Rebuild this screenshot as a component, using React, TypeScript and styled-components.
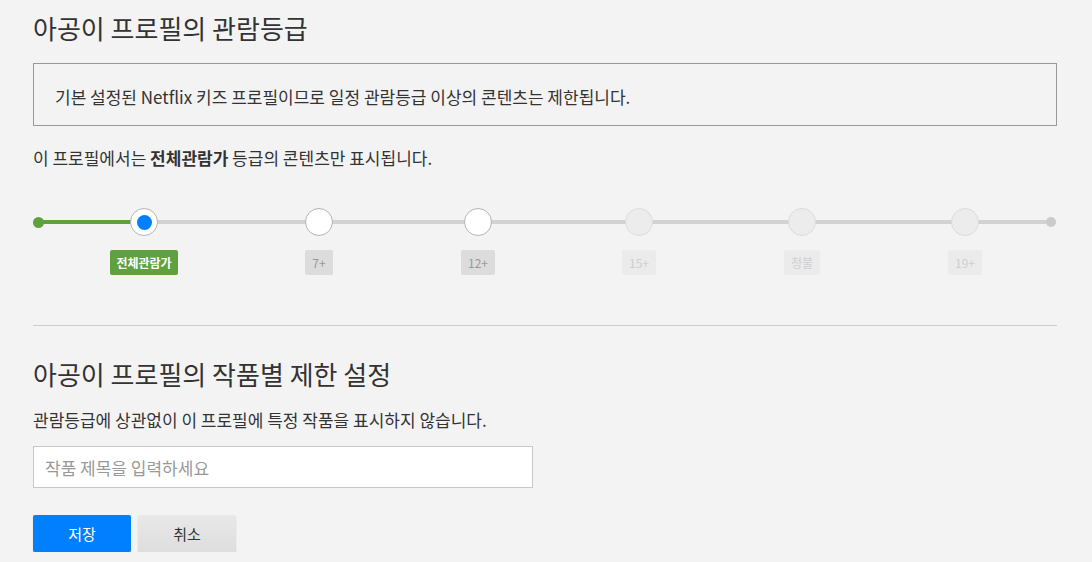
import React from "react";
import styled, { createGlobalStyle } from "styled-components";

const Global = createGlobalStyle`
  html, body { margin: 0; padding: 0; background: #f3f3f3; }
  body { font-family: "Noto Sans CJK KR", "Noto Sans", sans-serif; color: #333; }
  * { box-sizing: border-box; }
`;

const Page = styled.div`
  width: 1024px;
  margin-left: 33px;
  padding-top: 8px;
  display: flex;
  flex-direction: column;
`;

const Title = styled.h1<{ $top?: number }>`
  margin: ${(p) => p.$top ?? 0}px 0 0;
  font-size: 26px;
  font-weight: 400;
  line-height: 40px;
  color: #333;
`;

const Notice = styled.div`
  margin-top: 15px;
  border: 1px solid #999;
  height: 63px;
  padding: 4px 21px 0;
  display: flex;
  align-items: center;
  font-size: 17px;
`;

const Desc = styled.p<{ $top: number }>`
  margin: ${(p) => p.$top}px 0 0;
  font-size: 17px;
  line-height: 24px;
`;

const Track = styled.div`
  position: relative;
  height: 90px;
  margin-top: 38px;
`;

const Line = styled.div<{ $from: number; $to: number; $color: string }>`
  position: absolute;
  top: 12px;
  height: 4px;
  left: ${(p) => p.$from}px;
  width: ${(p) => p.$to - p.$from}px;
  background: ${(p) => p.$color};
`;

const EndDot = styled.div<{ $x: number; $color: string; $size: number }>`
  position: absolute;
  top: ${(p) => 14 - p.$size / 2}px;
  left: ${(p) => p.$x - p.$size / 2}px;
  width: ${(p) => p.$size}px;
  height: ${(p) => p.$size}px;
  border-radius: 50%;
  background: ${(p) => p.$color};
`;

const Stop = styled.div`
  position: absolute;
  top: 0;
  width: 0;
  display: flex;
  flex-direction: column;
  align-items: center;
  gap: 14px;
`;

type State = "selected" | "available" | "disabled";

const Knob = styled.div<{ $state: State }>`
  width: 28px;
  height: 28px;
  flex: none;
  border-radius: 50%;
  display: flex;
  align-items: center;
  justify-content: center;
  background: ${(p) => (p.$state === "disabled" ? "#ececec" : "#fff")};
  border: 1px solid ${(p) => (p.$state === "disabled" ? "#dcdcdc" : "#b5b5b5")};
`;

const KnobDot = styled.div`
  width: 15px;
  height: 15px;
  border-radius: 50%;
  background: #0080ff;
`;

const Badge = styled.div<{ $state: State }>`
  flex: none;
  height: 25px;
  padding: 0 ${(p) => (p.$state === "selected" ? 6 : 7)}px;
  display: flex;
  align-items: center;
  justify-content: center;
  white-space: nowrap;
  border-radius: 2px;
  font-size: 12px;
  font-weight: ${(p) => (p.$state === "selected" ? 700 : 400)};
  background: ${(p) =>
    p.$state === "selected" ? "#5fa03f" : p.$state === "available" ? "#dcdcdc" : "#ebebeb"};
  color: ${(p) =>
    p.$state === "selected" ? "#fff" : p.$state === "available" ? "#999" : "#cfcfcf"};
`;

const Divider = styled.hr`
  margin: 27px 0 0;
  border: 0;
  border-top: 1px solid #cccccc;
  height: 0;
`;

const Input = styled.input`
  margin-top: 14px;
  width: 500px;
  height: 42px;
  border: 1px solid #c8c8c8;
  background: #fff;
  padding: 0 11px;
  font-family: inherit;
  font-size: 17px;
  color: #333;
  outline: none;
  &::placeholder { color: #999; }
`;

const Actions = styled.div`
  margin-top: 27px;
  display: flex;
  gap: 7px;
`;

const Button = styled.button<{ $primary?: boolean }>`
  width: 98px;
  height: 37px;
  border: 0;
  border-radius: 2px;
  font-family: inherit;
  font-size: 15px;
  cursor: pointer;
  color: ${(p) => (p.$primary ? "#fff" : "#333")};
  background: ${(p) => (p.$primary ? "#0080ff" : "linear-gradient(#e8e8e8, #dedede)")};
  box-shadow: 0 1px 1px rgba(0, 0, 0, 0.25);
`;

const stops: { label: string; x: number; state: State }[] = [
  { label: "전체관람가", x: 111, state: "selected" },
  { label: "7+", x: 286, state: "available" },
  { label: "12+", x: 445, state: "available" },
  { label: "15+", x: 606, state: "disabled" },
  { label: "청불", x: 769, state: "disabled" },
  { label: "19+", x: 932, state: "disabled" },
];

export default function App() {
  return (
    <>
      <Global />
      <Page>
        <Title>아공이 프로필의 관람등급</Title>
        <Notice>기본 설정된 Netflix 키즈 프로필이므로 일정 관람등급 이상의 콘텐츠는 제한됩니다.</Notice>
        <Desc $top={20}>
          이 프로필에서는 <b>전체관람가</b> 등급의 콘텐츠만 표시됩니다.
        </Desc>
        <Track>
          <Line $from={5} $to={1018} $color="#d2d2d2" />
          <Line $from={5} $to={111} $color="#5fa03f" />
          <EndDot $x={5} $size={11} $color="#5fa03f" />
          <EndDot $x={1018} $size={10} $color="#cbcbcb" />
          {stops.map((s) => (
            <Stop key={s.label} style={{ left: s.x }}>
              <Knob $state={s.state}>{s.state === "selected" && <KnobDot />}</Knob>
              <Badge $state={s.state}>{s.label}</Badge>
            </Stop>
          ))}
        </Track>
        <Divider />
        <Title $top={28}>아공이 프로필의 작품별 제한 설정</Title>
        <Desc $top={14}>관람등급에 상관없이 이 프로필에 특정 작품을 표시하지 않습니다.</Desc>
        <Input placeholder="작품 제목을 입력하세요" />
        <Actions>
          <Button $primary>저장</Button>
          <Button>취소</Button>
        </Actions>
      </Page>
    </>
  );
}
